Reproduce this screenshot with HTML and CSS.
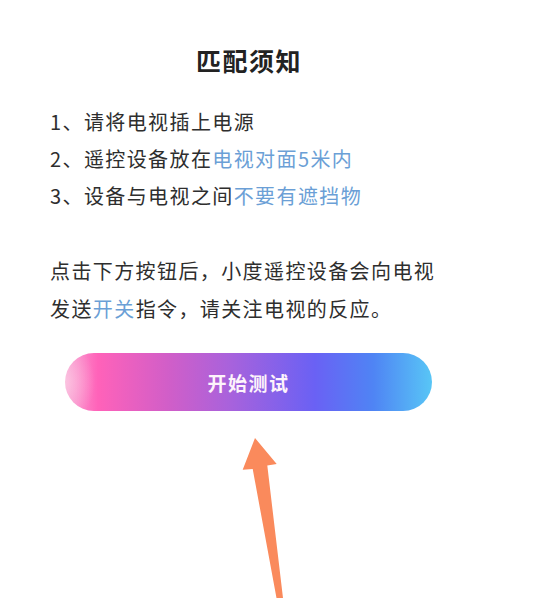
FILE: index.html
```html
<!DOCTYPE html>
<html lang="zh-CN">
<head>
<meta charset="utf-8">
<title>匹配须知</title>
<link rel="stylesheet" href="styles.css">
</head>
<body>
  <main class="page">
    <h1 class="title">匹配须知</h1>
    <ol class="steps">
      <li class="step">1、请将电视插上电源</li>
      <li class="step">2、遥控设备放在<span class="hl">电视对面5米内</span></li>
      <li class="step">3、设备与电视之间<span class="hl">不要有遮挡物</span></li>
    </ol>
    <p class="note">点击下方按钮后，小度遥控设备会向电视<br>发送<span class="hl">开关</span>指令，请关注电视的反应。</p>
    <button class="start-btn" type="button">开始测试</button>
    <svg class="pointer" width="50" height="162" viewBox="0 0 50 162" aria-hidden="true">
      <polygon points="15,2 36.7,28 27.3,29.5 43,162 36.5,162 12.7,33 2.7,33.7" fill="#fa8a5c"/>
    </svg>
  </main>
</body>
</html>
```

FILE: styles.css
```css
* {
  box-sizing: border-box;
}

html,
body {
  margin: 0;
  padding: 0;
  background: #ffffff;
}

body {
  width: 539px;
  height: 599px;
  overflow: hidden;
  font-family: "Noto Sans CJK SC", "Noto Sans", sans-serif;
  color: #2e2e2e;
}

.page {
  width: 398px;
  margin-left: 50px;
  padding-top: 42px;
  display: flex;
  flex-direction: column;
}

.title {
  margin: 0;
  text-align: center;
  font-size: 25px;
  line-height: 36px;
  font-weight: 700;
  letter-spacing: 1.5px;
  color: #222222;
}

.steps {
  list-style: none;
  margin: 25px 0 0;
  padding: 0;
}

.step {
  font-size: 20px;
  line-height: 37px;
  letter-spacing: 1.4px;
  white-space: nowrap;
}

.hl {
  color: #6b9fd6;
}

.note {
  margin: 38px 0 0;
  font-size: 20px;
  line-height: 38px;
  letter-spacing: 1.4px;
  white-space: nowrap;
}

.start-btn {
  align-self: flex-start;
  margin: 25px 0 0 15px;
  width: 367px;
  height: 58px;
  border: 0;
  border-radius: 29px;
  padding: 0;
  font-family: inherit;
  font-size: 19px;
  font-weight: 700;
  letter-spacing: 1.5px;
  color: #fdf4fb;
  background:
    radial-gradient(ellipse 30px 40px at 0% 50%, rgba(255, 220, 235, 0.55), rgba(255, 220, 235, 0) 100%),
    linear-gradient(90deg, #f7a6d4 0%, #ff62b9 9%, #d15ec8 28%, #a862dc 45%, #6a61f4 68%, #4f84f4 84%, #58c6f6 100%);
}

.pointer {
  display: block;
  margin: 25px 0 0 190px;
}
```
